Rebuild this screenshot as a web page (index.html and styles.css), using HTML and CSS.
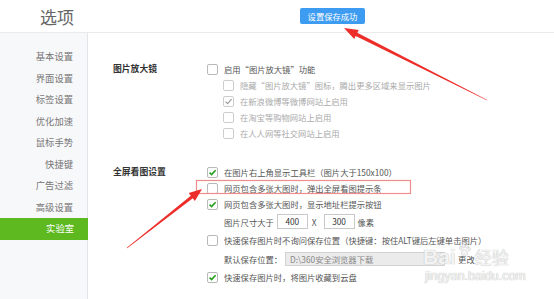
FILE: index.html
```html
<!DOCTYPE html>
<html lang="zh-CN">
<head>
  <meta charset="UTF-8" />
  <title>选项</title>
  <link rel="stylesheet" href="styles.css">
</head>
<body>

  <header class="top">
    <h1 class="page-title">选项</h1>
    <div class="toast">设置保存成功</div>
  </header>

  <div class="main">
    <ul class="side-nav">
      <li>基本设置</li>
      <li>界面设置</li>
      <li>标签设置</li>
      <li>优化加速</li>
      <li>鼠标手势</li>
      <li>快捷键</li>
      <li>广告过滤</li>
      <li>高级设置</li>
      <li class="active">实验室</li>
    </ul>

    <div class="content">
      <section class="group">
        <div class="group-title">图片放大镜</div>
        <div class="group-body">
          <div class="opt"><span class="check"></span>启用“图片放大镜”功能</div>
          <div class="opt sub disabled"><span class="check"></span>隐藏“图片放大镜”图标，腾出更多区域来显示图片</div>
          <div class="opt sub disabled"><span class="check checked"><svg viewBox="0 0 9 9"><path d="M1.6 4.6 L3.6 6.6 L7.6 2.2" /></svg></span>在新浪微博等微博网站上启用</div>
          <div class="opt sub disabled"><span class="check"></span>在淘宝等购物网站上启用</div>
          <div class="opt sub disabled"><span class="check"></span>在人人网等社交网站上启用</div>
        </div>
      </section>

      <section class="group second">
        <div class="group-title">全屏看图设置</div>
        <div class="group-body">
          <div class="opt"><span class="check checked"><svg viewBox="0 0 9 9"><path d="M1.6 4.6 L3.6 6.6 L7.6 2.2" /></svg></span>在图片右上角显示工具栏（图片大于150x100）</div>
          <div class="opt"><span class="check"></span>网页包含多张大图时，弹出全屏看图提示条</div>
          <div class="opt"><span class="check checked"><svg viewBox="0 0 9 9"><path d="M1.6 4.6 L3.6 6.6 L7.6 2.2" /></svg></span>网页包含多张大图时，显示地址栏提示按钮</div>
          <div class="opt tall plain">图片尺寸大于<span class="num-box">400</span><span class="times">X</span><span class="num-box">300</span><span class="unit">像素</span></div>
          <div class="opt mid"><span class="check"></span>快速保存图片时不询问保存位置（快捷键：按住ALT键后左键单击图片）</div>
          <div class="opt tall plain">默认保存位置：<span class="path-box">D:\360安全浏览器下载</span><span class="change">更改</span></div>
          <div class="opt mid"><span class="check checked"><svg viewBox="0 0 9 9"><path d="M1.6 4.6 L3.6 6.6 L7.6 2.2" /></svg></span>快速保存图片时，将图片收藏到云盘</div>
        </div>
      </section>
    </div>
  </div>

  <div class="watermark">
    <div class="wm-logo">Bai<svg class="paw" viewBox="0 0 14 14"><ellipse cx="3" cy="5" rx="1.6" ry="2"/><ellipse cx="6" cy="2.6" rx="1.6" ry="2"/><ellipse cx="9.6" cy="3" rx="1.6" ry="2"/><ellipse cx="12" cy="6" rx="1.5" ry="1.9"/><path d="M7 6.5 C4.5 6.5 3 9.5 3.5 11.5 C4 13 6 12.5 7 12.5 C8 12.5 10 13 10.5 11.5 C11 9.5 9.5 6.5 7 6.5 Z"/></svg><span class="wm-cn">经验</span></div>
    <div class="wm-url">jingyan.baidu.com</div>
  </div>

  <!-- 标注 -->
  <svg class="marks" viewBox="0 0 554 299" width="554" height="299">
    <rect x="196.5" y="180.5" width="214" height="13" fill="none" stroke="#f08c8c" stroke-width="1.2" />
    <polygon points="487.2,100.6 486.8,99.8 357.3,32.8 358.8,29.9 344,28 354.2,38.9 355.7,35.9" fill="#ec2d2a" />
    <polygon points="127.2,248.2 126.8,247.8 190.8,195.8 188.7,193.1 202,189 194.9,200.9 192.8,198.3" fill="#ec2d2a" />
  </svg>

</body>
</html>
```

FILE: styles.css
```css
* {
  margin: 0;
  padding: 0;
  box-sizing: border-box;
}

body {
  width: 554px;
  height: 299px;
  overflow: hidden;
  position: relative;
  display: flex;
  flex-direction: column;
  background-color: #fff;
  font-family: "Noto Sans CJK SC", "Liberation Sans", sans-serif;
  color: #555;
}

.top {
  height: 33px;
  flex-shrink: 0;
  display: flex;
  align-items: center;
  border-bottom: 1px solid #ebebeb;
  padding-left: 40px;
}

.page-title {
  font-size: 17px;
  font-weight: 400;
  color: #666;
  line-height: 1;
  width: 34px;
  margin-top: 1px;
}

.toast {
  margin-left: 226px;
  margin-top: -1px;
  width: 65px;
  height: 16px;
  line-height: 16px;
  text-align: center;
  background-color: #3d9cf1;
  color: #fff;
  font-size: 8.3px;
  border-radius: 2px;
}

.main {
  flex: 1;
  display: flex;
}

.side-nav {
  list-style: none;
  width: 88px;
  flex-shrink: 0;
  padding-top: 13px;
  background-color: #f7f8fa;
  border-right: 1px solid #e4e5e8;
}

.side-nav li {
  height: 21.5px;
  line-height: 21.5px;
  text-align: right;
  padding-right: 14px;
  font-size: 9.3px;
  color: #777;
}

.side-nav li.active {
  background-color: #5db91f;
  color: #fff;
  margin-right: -1px;
}

.content {
  flex: 1;
  padding: 28px 0 0 25px;
}

.group {
  display: grid;
  grid-template-columns: 94px 1fr;
}

.group.second {
  margin-top: 23px;
}

.group-title {
  font-size: 8.8px;
  font-weight: 700;
  color: #333;
  line-height: 16px;
}

.opt {
  display: flex;
  align-items: center;
  height: 16px;
  font-size: 8.3px;
  color: #555;
  white-space: nowrap;
}

.opt.tall {
  height: 19px;
}

.opt.mid {
  height: 18px;
}

.opt.plain {
  padding-left: 17px;
}

.opt.sub {
  padding-left: 16px;
}

.opt.disabled {
  color: #aaa;
}

.check {
  width: 11px;
  height: 11px;
  margin-right: 6px;
  border: 1px solid #b9b9b9;
  border-radius: 2px;
  background-color: #fff;
  flex-shrink: 0;
  display: flex;
}

.opt.disabled .check {
  border-color: #cdcdcd;
}

.check svg {
  width: 9px;
  height: 9px;
  fill: none;
  stroke: #24a01c;
  stroke-width: 1.6;
}

.opt.disabled .check svg {
  stroke: #9a9a9a;
  stroke-width: 1.2;
}

.num-box {
  width: 31px;
  height: 15px;
  margin-left: 3px;
  border: 1px solid #c9c9c9;
  background-color: #fff;
  text-align: center;
  line-height: 13px;
  color: #333;
}

.times {
  margin: 0 4px;
}

.unit {
  margin-left: 3px;
}

.path-box {
  width: 160px;
  height: 14px;
  margin-left: 3px;
  padding-left: 4px;
  line-height: 12px;
  border: 1px solid #d2d2d2;
  background-color: #ebebeb;
  color: #888;
}

.change {
  margin-left: 13px;
  color: #555;
}

.watermark {
  position: absolute;
  left: 423px;
  top: 243px;
  color: #f3f3f3;
  text-shadow: 0 0 1px #c4c4c4, 0 0 1px #c4c4c4;
  font-family: "Liberation Sans", sans-serif;
}

.wm-logo {
  display: flex;
  align-items: flex-end;
  font-size: 21px;
  font-weight: 700;
  line-height: 24px;
}

.paw {
  width: 13px;
  height: 14px;
  margin: 0 4px 12px 2px;
  fill: #f3f3f3;
  stroke: #c8c8c8;
  stroke-width: 0.6;
}

.wm-cn {
  font-family: "Noto Sans CJK SC", sans-serif;
  font-size: 17px;
  font-weight: 400;
}

.wm-url {
  font-size: 12.5px;
  line-height: 14px;
  padding-left: 2px;
}

.marks {
  position: absolute;
  left: 0;
  top: 0;
  pointer-events: none;
}
```
